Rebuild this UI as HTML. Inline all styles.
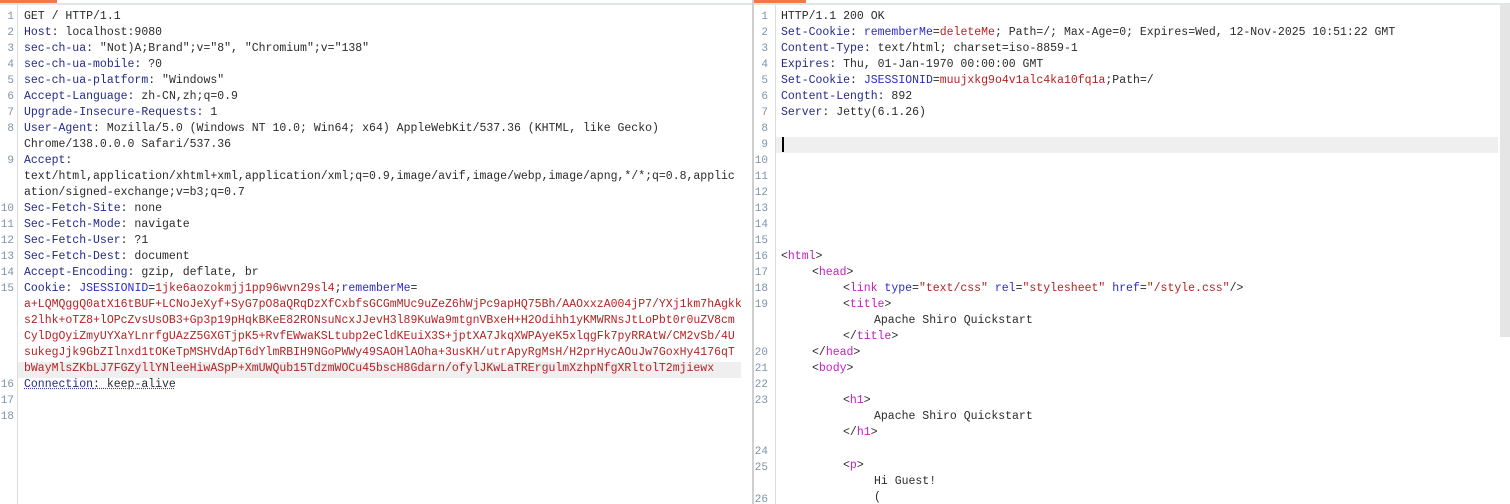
<!DOCTYPE html>
<html><head><meta charset="utf-8">
<style>
html,body{margin:0;padding:0;background:#fff;width:1510px;height:504px;overflow:hidden}
body{position:relative;font-family:"Liberation Mono","Noto Sans CJK SC",monospace;font-size:11.5px;color:#2b2b2b}
.topline{position:absolute;top:3px;height:2px;background:#e2e5e5}
.orange{position:absolute;top:0;height:3px;background:#f0784a}
.pane{position:absolute;top:5px;bottom:0;overflow:hidden}
.r{position:absolute;height:16px;line-height:16px;white-space:pre;transform:translateY(2px)}
.n{position:absolute;width:14px;text-align:right;color:#7d92a8;font-size:11px;line-height:16px;height:16px;transform:translateY(2px)}
.h{color:#242a8c}
.v{color:#2b2b2b}
.c{color:#b42323}
.b{color:#2a2ad0}
.t{color:#c21fc2}
.hl{position:absolute;height:16px;background:#efefef}
.gut{position:absolute;top:5px;bottom:0;width:1px;background:#dcdcdc}
</style></head><body>
<div class="topline" style="left:0;width:752px"></div>
<div class="topline" style="left:754px;width:756px"></div>
<div class="orange" style="left:0;width:57px"></div>
<div class="orange" style="left:754px;width:52px"></div>
<div style="position:absolute;left:752px;top:0;width:2px;height:504px;background:#cfcfcf"></div>

<!-- LEFT -->
<div class="pane" style="left:0;width:741px">
<div class="hl" style="left:18px;width:723px;top:357px"></div>
</div>
<div class="gut" style="left:17px"></div>
<div style="position:absolute;left:0;top:0;width:741px;height:504px;overflow:hidden">
<div class="n" style="left:0;top:7px">1</div><div class="r" style="left:24px;top:7px">GET / HTTP/1.1</div>
<div class="n" style="left:0;top:23px">2</div><div class="r" style="left:24px;top:23px"><span class="h">Host</span>: localhost:9080</div>
<div class="n" style="left:0;top:39px">3</div><div class="r" style="left:24px;top:39px"><span class="h">sec-ch-ua</span>: "Not)A;Brand";v="8", "Chromium";v="138"</div>
<div class="n" style="left:0;top:55px">4</div><div class="r" style="left:24px;top:55px"><span class="h">sec-ch-ua-mobile</span>: ?0</div>
<div class="n" style="left:0;top:71px">5</div><div class="r" style="left:24px;top:71px"><span class="h">sec-ch-ua-platform</span>: "Windows"</div>
<div class="n" style="left:0;top:87px">6</div><div class="r" style="left:24px;top:87px"><span class="h">Accept-Language</span>: zh-CN,zh;q=0.9</div>
<div class="n" style="left:0;top:103px">7</div><div class="r" style="left:24px;top:103px"><span class="h">Upgrade-Insecure-Requests</span>: 1</div>
<div class="n" style="left:0;top:119px">8</div><div class="r" style="left:24px;top:119px"><span class="h">User-Agent</span>: Mozilla/5.0 (Windows NT 10.0; Win64; x64) AppleWebKit/537.36 (KHTML, like Gecko)</div>
<div class="r" style="left:24px;top:135px">Chrome/138.0.0.0 Safari/537.36</div>
<div class="n" style="left:0;top:151px">9</div><div class="r" style="left:24px;top:151px"><span class="h">Accept</span>:</div>
<div class="r" style="left:24px;top:167px">text/html,application/xhtml+xml,application/xml;q=0.9,image/avif,image/webp,image/apng,*/*;q=0.8,applic</div>
<div class="r" style="left:24px;top:183px">ation/signed-exchange;v=b3;q=0.7</div>
<div class="n" style="left:0;top:199px">10</div><div class="r" style="left:24px;top:199px"><span class="h">Sec-Fetch-Site</span>: none</div>
<div class="n" style="left:0;top:215px">11</div><div class="r" style="left:24px;top:215px"><span class="h">Sec-Fetch-Mode</span>: navigate</div>
<div class="n" style="left:0;top:231px">12</div><div class="r" style="left:24px;top:231px"><span class="h">Sec-Fetch-User</span>: ?1</div>
<div class="n" style="left:0;top:247px">13</div><div class="r" style="left:24px;top:247px"><span class="h">Sec-Fetch-Dest</span>: document</div>
<div class="n" style="left:0;top:263px">14</div><div class="r" style="left:24px;top:263px"><span class="h">Accept-Encoding</span>: gzip, deflate, br</div>
<div class="n" style="left:0;top:279px">15</div><div class="r" style="left:24px;top:279px"><span class="h">Cookie</span>: <span class="b">JSESSIONID</span>=<span class="c">1jke6aozokmjj1pp96wvn29sl4</span>;<span class="b">rememberMe</span>=</div>
<div class="r c" style="left:24px;top:295px">a+LQMQggQ0atX16tBUF+LCNoJeXyf+SyG7pO8aQRqDzXfCxbfsGCGmMUc9uZeZ6hWjPc9apHQ75Bh/AAOxxzA004jP7/YXj1km7hAgkk</div>
<div class="r c" style="left:24px;top:311px">s2lhk+oTZ8+lOPcZvsUsOB3+Gp3p19pHqkBKeE82RONsuNcxJJevH3l89KuWa9mtgnVBxeH+H2Odihh1yKMWRNsJtLoPbt0r0uZV8cm</div>
<div class="r c" style="left:24px;top:327px">CylDgOyiZmyUYXaYLnrfgUAzZ5GXGTjpK5+RvfEWwaKSLtubp2eCldKEuiX3S+jptXA7JkqXWPAyeK5xlqgFk7pyRRAtW/CM2vSb/4U</div>
<div class="r c" style="left:24px;top:343px">sukegJjk9GbZIlnxd1tOKeTpMSHVdApT6dYlmRBIH9NGoPWWy49SAOHlAOha+3usKH/utrApyRgMsH/H2prHycAOuJw7GoxHy4176qT</div>
<div class="r c" style="left:24px;top:359px">bWayMlsZKbLJ7FGZyllYNleeHiwASpP+XmUWQub15TdzmWOCu45bscH8Gdarn/ofylJKwLaTRErgulmXzhpNfgXRltolT2mjiewx</div>
<div class="n" style="left:0;top:375px">16</div><div class="r" style="left:24px;top:375px;text-decoration:underline dotted #3040c0"><span class="h">Connection</span>: keep-alive</div>
<div class="n" style="left:0;top:391px">17</div>
<div class="n" style="left:0;top:407px">18</div>
</div>

<!-- RIGHT -->
<div class="hl" style="left:776px;width:722px;top:137px"></div>
<div class="gut" style="left:775px"></div>
<div style="position:absolute;left:1500px;top:5px;width:10px;height:332px;background:#e5e5e5"></div>
<div style="position:absolute;left:754px;top:0;width:745px;height:504px;overflow:hidden">
<div class="n" style="left:0;top:7px">1</div><div class="r" style="left:27px;top:7px">HTTP/1.1 200 OK</div>
<div class="n" style="left:0;top:23px">2</div><div class="r" style="left:27px;top:23px"><span class="h">Set-Cookie</span>: <span class="b">rememberMe</span>=<span class="c">deleteMe</span>; Path=/; Max-Age=0; Expires=Wed, 12-Nov-2025 10:51:22 GMT</div>
<div class="n" style="left:0;top:39px">3</div><div class="r" style="left:27px;top:39px"><span class="h">Content-Type</span>: text/html; charset=iso-8859-1</div>
<div class="n" style="left:0;top:55px">4</div><div class="r" style="left:27px;top:55px"><span class="h">Expires</span>: Thu, 01-Jan-1970 00:00:00 GMT</div>
<div class="n" style="left:0;top:71px">5</div><div class="r" style="left:27px;top:71px"><span class="h">Set-Cookie</span>: <span class="b">JSESSIONID</span>=<span class="c">muujxkg9o4v1alc4ka10fq1a</span>;Path=/</div>
<div class="n" style="left:0;top:87px">6</div><div class="r" style="left:27px;top:87px"><span class="h">Content-Length</span>: 892</div>
<div class="n" style="left:0;top:103px">7</div><div class="r" style="left:27px;top:103px"><span class="h">Server</span>: Jetty(6.1.26)</div>
<div class="n" style="left:0;top:119px">8</div>
<div class="n" style="left:0;top:135px">9</div><div style="position:absolute;left:28px;top:137px;width:2px;height:15px;background:#000"></div>
<div class="n" style="left:0;top:151px">10</div>
<div class="n" style="left:0;top:167px">11</div>
<div class="n" style="left:0;top:183px">12</div>
<div class="n" style="left:0;top:199px">13</div>
<div class="n" style="left:0;top:215px">14</div>
<div class="n" style="left:0;top:231px">15</div>
<div class="n" style="left:0;top:247px">16</div><div class="r" style="left:27px;top:247px">&lt;<span class="t">html</span>&gt;</div>
<div class="n" style="left:0;top:263px">17</div><div class="r" style="left:58px;top:263px">&lt;<span class="t">head</span>&gt;</div>
<div class="n" style="left:0;top:279px">18</div><div class="r" style="left:89px;top:279px">&lt;<span class="t">link</span> <span class="b">type</span>=<span class="c">"text/css"</span> <span class="b">rel</span>=<span class="c">"stylesheet"</span> <span class="b">href</span>=<span class="c">"/style.css"</span>/&gt;</div>
<div class="n" style="left:0;top:295px">19</div><div class="r" style="left:89px;top:295px">&lt;<span class="t">title</span>&gt;</div>
<div class="r" style="left:120px;top:311px">Apache Shiro Quickstart</div>
<div class="r" style="left:89px;top:327px">&lt;/<span class="t">title</span>&gt;</div>
<div class="n" style="left:0;top:343px">20</div><div class="r" style="left:58px;top:343px">&lt;/<span class="t">head</span>&gt;</div>
<div class="n" style="left:0;top:359px">21</div><div class="r" style="left:58px;top:359px">&lt;<span class="t">body</span>&gt;</div>
<div class="n" style="left:0;top:375px">22</div>
<div class="n" style="left:0;top:391px">23</div><div class="r" style="left:89px;top:391px">&lt;<span class="t">h1</span>&gt;</div>
<div class="r" style="left:120px;top:407px">Apache Shiro Quickstart</div>
<div class="r" style="left:89px;top:423px">&lt;/<span class="t">h1</span>&gt;</div>
<div class="n" style="left:0;top:442px">24</div>
<div class="n" style="left:0;top:458px">25</div><div class="r" style="left:89px;top:456px">&lt;<span class="t">p</span>&gt;</div>
<div class="r" style="left:120px;top:472px">Hi Guest!</div>
<div class="n" style="left:0;top:490px">26</div><div class="r" style="left:120px;top:488px">(</div>
</div>
</body></html>
